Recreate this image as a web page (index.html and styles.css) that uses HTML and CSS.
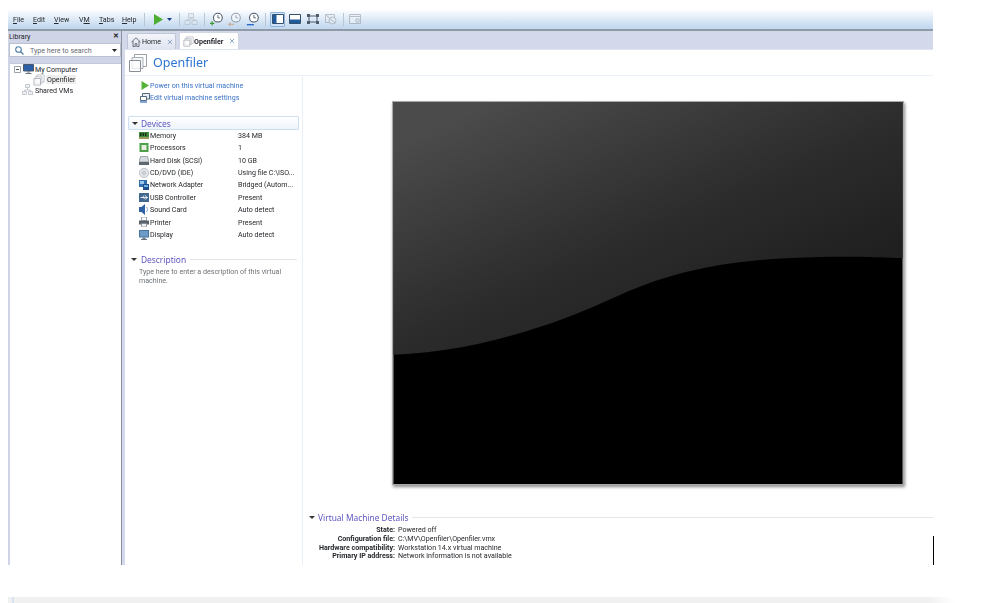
FILE: index.html
```html
<!DOCTYPE html>
<html lang="en">
<head>
<meta charset="utf-8">
<title>Openfiler - VMware Workstation</title>
<link rel="stylesheet" href="styles.css">
</head>
<body>
<svg class="defs" width="0" height="0" aria-hidden="true">
  <symbol id="i-vm" viewBox="0 0 20 20">
    <path d="M6.500 1.500h12v12h-12z" fill="#fff" stroke="#9aa0a8"/>
    <path d="M4 4.500h11v11H4z" fill="#f4f5f7" stroke="#a8aeb5"/>
    <path d="M1.500 7.500h11v11h-11z" fill="#fff" fill-opacity=".7" stroke="#8a9098"/>
  </symbol>
  <symbol id="i-clock" viewBox="0 0 16 16">
    <circle cx="9" cy="6.500" r="5" fill="#fff" stroke="#4c5a68" stroke-width="1.200"/>
    <path d="M9 3.500v3.200h2.400" fill="none" stroke="#4c5a68"/>
  </symbol>
  <symbol id="i-x" viewBox="0 0 7 7">
    <path d="M1 1l5 5M6 1L1 6" fill="none" stroke="#8ba2bd" stroke-width="1.100"/>
  </symbol>
</svg>
<div class="window">
  <header class="toolbar">
    <nav class="menu">
      <span><u>F</u>ile</span>
      <span><u>E</u>dit</span>
      <span><u>V</u>iew</span>
      <span>V<u>M</u></span>
      <span><u>T</u>abs</span>
      <span><u>H</u>elp</span>
    </nav>
    <span class="tsep"></span>
    <svg class="ml8" width="10" height="11" viewBox="0 0 10 11"><path d="M1 0l9 5.500L1 11z" fill="#4caf32"/></svg>
    <svg class="ml4" width="5" height="3" viewBox="0 0 5 3"><path d="M0 0h5L2.500 3z" fill="#1d3f8f"/></svg>
    <span class="tsep ml7"></span>
    <svg class="ml4 faded" width="14" height="14" viewBox="0 0 14 14"><path d="M4.500 1.500h5v4h-5zM1 8.500h5v4H1zM8 8.500h5v4H8z" fill="#dfe6ee" stroke="#a9b2bc"/><path d="M7 5.500v2M3.500 8.500v-1.500h7v1.500" fill="none" stroke="#a9b2bc"/></svg>
    <span class="tsep ml6"></span>
    <svg class="ml5" width="14" height="14" viewBox="0 0 16 16"><use href="#i-clock"/><path d="M0 13h5M2.500 10.500v5" stroke="#3f9a3a" stroke-width="1.400"/></svg>
    <svg class="ml4 faded" width="14" height="14" viewBox="0 0 16 16"><use href="#i-clock"/><path d="M1 14h6M3 12l-2 2 2 2" fill="none" stroke="#c77a3a" stroke-width="1.200"/></svg>
    <svg class="ml4" width="14" height="14" viewBox="0 0 16 16"><use href="#i-clock"/><path d="M1 14.500h8" stroke="#2868c8" stroke-width="1.600"/></svg>
    <span class="tsep ml5"></span>
    <span class="view-active ml4"><svg width="12" height="10" viewBox="0 0 12 10"><path d="M.5.500h11v9H.5z" fill="#fff" stroke="#33506f"/><path d="M1 1h3.500v8H1z" fill="#1f5a9a"/></svg></span>
    <svg class="ml4" width="12" height="10" viewBox="0 0 12 10"><path d="M.5.500h11v9H.5z" fill="#fff" stroke="#33506f"/><path d="M1 5.500h10V9H1z" fill="#1f5a9a"/></svg>
    <svg class="ml6" width="12" height="10" viewBox="0 0 12 10"><path d="M2 2h8v6H2z" fill="none" stroke="#4d5c6c"/><path d="M0 0h3v3H0zM9 0h3v3H9zM0 7h3v3H0zM9 7h3v3H9z" fill="#4d5c6c"/></svg>
    <svg class="ml6 faded" width="12" height="11" viewBox="0 0 12 11"><path d="M.5.500h9v8h-9z" fill="#e6ebf1" stroke="#8e98a3"/><circle cx="7.500" cy="6.500" r="3.500" fill="#e6ebf1" stroke="#8e98a3"/><path d="M1 1l9 8" stroke="#8e98a3"/></svg>
    <span class="tsep ml6"></span>
    <svg class="ml5 faded" width="12" height="10" viewBox="0 0 12 10"><path d="M.5.500h11v9H.5z" fill="#eef1f5" stroke="#8e98a3"/><path d="M.5 2.500h11M7 5h3v3H7z" fill="none" stroke="#8e98a3"/></svg>
  </header>

  <div class="main">
    <aside class="sidebar">
      <div class="lib-head"><span>Library</span><span class="lib-close">✕</span></div>
      <div class="search">
        <svg width="9" height="9" viewBox="0 0 9 9"><circle cx="3.500" cy="3.500" r="2.800" fill="none" stroke="#4d7ea8" stroke-width="1.100"/><path d="M5.500 5.500L8.500 8.500" stroke="#4d7ea8" stroke-width="1.300"/></svg>
        <span class="search-text">Type here to search</span>
        <svg width="5" height="3" viewBox="0 0 5 3"><path d="M0 0h5L2.500 3z" fill="#222"/></svg>
      </div>
      <div class="tree">
        <div class="tree-row">
          <svg class="twist" width="7" height="7" viewBox="0 0 7 7"><path d="M.5.500h6v6h-6z" fill="#fff" stroke="#9aa3ad"/><path d="M2 3.500h3" stroke="#555"/></svg>
          <svg width="11" height="10" viewBox="0 0 11 10"><path d="M.5.500h10v6.500H.5z" fill="#2c5fa8" stroke="#4a5a6c"/><path d="M4 7.500h3v1H4zM2.500 9h6v1h-6z" fill="#6b7683"/></svg>
          <span>My Computer</span>
        </div>
        <div class="tree-row tree-vm">
          <svg width="12" height="12"><use href="#i-vm"/></svg>
          <span class="tree-selected">Openfiler</span>
        </div>
        <div class="tree-row tree-shared">
          <svg class="pale" width="11" height="12" viewBox="0 0 11 12"><path d="M3.500.500h4v3h-4zM.5 7.500h4v3h-4zM6.500 7.500h4v3h-4z" fill="#eceff3" stroke="#b4bac2"/><path d="M5.500 3.500v2.500M2.500 7.500V6h6v1.500" fill="none" stroke="#b4bac2"/></svg>
          <span>Shared VMs</span>
        </div>
      </div>
    </aside>
    <div class="split"></div>

    <section class="content">
      <div class="tabs">
        <div class="tab">
          <svg width="10" height="10" viewBox="0 0 10 10"><path d="M.5 5L5 .8 9.500 5M2 4v5.500h2.200V6.500h1.600v3H8V4" fill="none" stroke="#5c6670" stroke-width=".9"/></svg>
          <span>Home</span>
          <svg class="tab-x" width="6" height="6"><use href="#i-x"/></svg>
        </div>
        <div class="tab tab-on">
          <svg width="11" height="11"><use href="#i-vm"/></svg>
          <span>Openfiler</span>
          <svg class="tab-x" width="6" height="6"><use href="#i-x"/></svg>
        </div>
      </div>
      <div class="title-row">
        <svg width="20" height="20"><use href="#i-vm"/></svg>
        <h1>Openfiler</h1>
      </div>
      <div class="body">
        <div class="left">
          <div class="action">
            <svg width="8" height="9" viewBox="0 0 8 9"><path d="M.5 0L8 4.500.5 9z" fill="#55b33c"/></svg>
            <span>Power on this virtual machine</span>
          </div>
          <div class="action action-b">
            <svg width="10" height="10" viewBox="0 0 10 10"><path d="M2.500.500h7v5.500h-7z" fill="#e9eef4" stroke="#56687c"/><path d="M.5 3.500h6v4h-6z" fill="#fff" stroke="#56687c"/><path d="M0 9h7" stroke="#2a6ac0" stroke-width="1.200"/></svg>
            <span>Edit virtual machine settings</span>
          </div>

          <div class="group-head group-box"><span class="tri"></span><span class="group-title">Devices</span></div>
          <ul class="devices">
            <li>
              <svg width="10" height="7" viewBox="0 0 10 7"><path d="M0 0h10v5H0z" fill="#3f8a3c"/><path d="M1 1h1.500v3H1zM3.500 1H5v3H3.500zM6 1h1.500v3H6z" fill="#16351a"/><path d="M0 5h10v2H0z" fill="#9a9a58"/></svg>
              <span class="d-name">Memory</span><span class="d-val">384 MB</span>
            </li>
            <li>
              <svg width="9" height="9" viewBox="0 0 9 9"><path d="M0 0h9v9H0z" fill="#4f9e4a"/><path d="M2 2h5v5H2z" fill="#e6efe0"/></svg>
              <span class="d-name">Processors</span><span class="d-val">1</span>
            </li>
            <li>
              <svg width="10" height="9" viewBox="0 0 10 9"><path d="M1.500.500h7L10 6H0z" fill="#d7dbe0" stroke="#7e8790" stroke-width=".7"/><path d="M0 6h10v3H0z" fill="#5f6870"/></svg>
              <span class="d-name">Hard Disk (SCSI)</span><span class="d-val">10 GB</span>
            </li>
            <li>
              <svg width="10" height="10" viewBox="0 0 10 10"><circle cx="5" cy="5" r="4.700" fill="#dfe2e6" stroke="#a7adb4" stroke-width=".6"/><circle cx="5" cy="5" r="1.300" fill="#fff" stroke="#8a9097" stroke-width=".6"/></svg>
              <span class="d-name">CD/DVD (IDE)</span><span class="d-val">Using file C:\ISO...</span>
            </li>
            <li>
              <svg width="10" height="10" viewBox="0 0 10 10"><path d="M0 0h8v7H0z" fill="#2f6fb0"/><path d="M1 1h4v3H1z" fill="#9cc6ea"/><path d="M4 4h6v6H4z" fill="#1d4f8c"/><path d="M5 5h4v2H5z" fill="#6fb1e2"/></svg>
              <span class="d-name">Network Adapter</span><span class="d-val">Bridged (Autom...</span>
            </li>
            <li>
              <svg width="10" height="9" viewBox="0 0 10 9"><path d="M0 0h10v9H0z" fill="#44698f"/><path d="M1.500 4.500h7M6 2.500l2.500 2-2.500 2M3.500 4.500l1.500-2M4.500 4.500l1 1.500" fill="none" stroke="#fff" stroke-width=".8"/></svg>
              <span class="d-name">USB Controller</span><span class="d-val">Present</span>
            </li>
            <li>
              <svg width="10" height="11" viewBox="0 0 10 11"><path d="M6 0v11L2.500 8H0V3h2.500z" fill="#2f62a5"/><path d="M7.500 3c1.200 1.500 1.200 3.500 0 5" fill="none" stroke="#8aa4c4"/></svg>
              <span class="d-name">Sound Card</span><span class="d-val">Auto detect</span>
            </li>
            <li>
              <svg width="10" height="10" viewBox="0 0 10 10"><path d="M2.500 0h5v3.500h-5z" fill="#fff" stroke="#7a838c" stroke-width=".7"/><path d="M0 3.500h10v4H0z" fill="#59626b"/><path d="M2.500 6.500h5V10h-5z" fill="#eef0f2" stroke="#7a838c" stroke-width=".7"/></svg>
              <span class="d-name">Printer</span><span class="d-val">Present</span>
            </li>
            <li>
              <svg width="10" height="10" viewBox="0 0 10 10"><path d="M0 0h10v7.500H0z" fill="#47729e"/><path d="M1 1h8v5.500H1z" fill="#6d9ac6"/><path d="M3.500 7.500h3V9h-3zM2 9h6v1H2z" fill="#6b7683"/></svg>
              <span class="d-name">Display</span><span class="d-val">Auto detect</span>
            </li>
          </ul>

          <div class="group-head group-desc"><span class="tri"></span><span class="group-title">Description</span><span class="rule"></span></div>
          <p class="desc">Type here to enter a description of this virtual machine.</p>
        </div>

        <div class="right">
          <div class="stage">
            <svg class="screen" width="512" height="384" viewBox="0 0 512 384">
              <defs>
                <linearGradient id="scr" gradientUnits="userSpaceOnUse" x1="100" y1="0" x2="220" y2="276">
                  <stop offset="0" stop-color="#4b4b4b"/>
                  <stop offset=".6" stop-color="#2c2c2c"/>
                  <stop offset="1" stop-color="#1f1f1f"/>
                </linearGradient>
              </defs>
              <path d="M0 0h512v384H0z" fill="#000"/>
              <path d="M0 0h512v157C490 156 460 155 421 156 350 158 290 165 221 197 150 230 70 252 0 254z" fill="url(#scr)"/>
            </svg>
          </div>
          <div class="details">
            <div class="group-head"><span class="tri"></span><span class="group-title">Virtual Machine Details</span><span class="rule"></span></div>
            <dl class="facts">
              <dt>State:</dt><dd>Powered off</dd>
              <dt>Configuration file:</dt><dd>C:\MV\Openfiler\Openfiler.vmx</dd>
              <dt>Hardware compatibility:</dt><dd>Workstation 14.x virtual machine</dd>
              <dt>Primary IP address:</dt><dd>Network information is not available</dd>
            </dl>
          </div>
        </div>
      </div>
    </section>
  </div>
  <span class="tick"></span>
</div>
<div class="strip"></div>
</body>
</html>
```

FILE: styles.css
```css
* { box-sizing: border-box; }
html, body { height: 100%; }
body {
  margin: 10px 0 0 8px;
  height: 593px;
  overflow: hidden;
  background: #fff;
  font-family: Roboto, "Noto Sans", sans-serif;
  font-size: 7.100px;
  line-height: 9px;
  color: #25282c;
}
.defs { position: absolute; }
svg { display: block; flex: none; }

.window {
  position: relative;
  width: 925px;
  height: 555px;
  display: flex;
  flex-direction: column;
}

/* toolbar */
.toolbar {
  height: 21px;
  flex: none;
  display: flex;
  align-items: center;
  padding: 0 0 1px 5px;
  background: linear-gradient(#fbfdff, #c4d9ef 90%);
  border-bottom: 2px solid #8f9aa9;
  filter: blur(.3px);
}
.menu {
  width: 131px;
  flex: none;
  display: grid;
  grid-template-columns: 20px 21px 25px 20px 23px auto;
}
.tsep { width: 1px; height: 13px; background: #b8c6d6; flex: none; }
.ml4 { margin-left: 4px; }
.ml5 { margin-left: 5px; }
.ml6 { margin-left: 6px; }
.ml7 { margin-left: 7px; }
.ml8 { margin-left: 8px; }
.faded { opacity: .55; }
.pale { opacity: .8; }
.view-active {
  width: 15px;
  height: 15px;
  flex: none;
  display: flex;
  align-items: center;
  justify-content: center;
  background: #cfe2f6;
  border: 1px solid #8fb3d9;
  border-radius: 1px;
}

/* layout */
.main { flex: 1; display: flex; min-height: 0; filter: blur(.3px); }
.sidebar {
  width: 113px;
  flex: none;
  display: flex;
  flex-direction: column;
  background: #cfd4e6;
  padding-left: 2px;
}
.split {
  width: 4px;
  flex: none;
  background: linear-gradient(90deg, #8a909c 0, #8a909c 35%, #d3d8ea 35%);
}
.lib-head {
  height: 12px;
  flex: none;
  display: flex;
  justify-content: space-between;
  align-items: center;
  margin-left: -1px;
  padding: 0 2px 2px 0;
}
.lib-close { font-size: 7px; color: #222; font-weight: 700; }
.search {
  height: 14px;
  flex: none;
  margin-left: -1px;
  display: flex;
  align-items: center;
  padding: 0 3px 0 5px;
  background: #fff;
  border: 1px solid #bcc3d0;
}
.search-text { margin-left: 6px; color: #666c74; flex: 1; }
.tree {
  flex: 1;
  margin-top: 6px;
  background: #fff;
  padding-left: 4px;
  border-top: 1px solid #c3c9d6;
}
.tree-row { display: flex; align-items: center; height: 10.500px; gap: 2px; }
.tree-row svg + svg { margin-right: -1px; }
.tree-vm { padding-left: 19px; gap: 1px; }
.tree-selected { background: #eeeeee; padding: 0 1px; }
.tree-shared { padding-left: 8px; gap: 2px; }

/* tabs */
.content { flex: 1; display: flex; flex-direction: column; min-width: 0; }
.tabs {
  height: 19px;
  flex: none;
  display: flex;
  align-items: flex-end;
  gap: 3px;
  padding-left: 2px;
  background: #d3d8ea;
  border-bottom: 1px solid #dfe4f2;
}
.tab {
  width: 49px;
  height: 16px;
  flex: none;
  display: flex;
  align-items: center;
  gap: 1px;
  padding: 0 2px 0 3px;
  background: linear-gradient(#f3f5fa, #dfe4f1);
  border: 1px solid #bfc6d6;
  border-bottom: 0;
  border-radius: 2px 2px 0 0;
}
.tab-x { margin-left: auto; }
.tab-on {
  width: 60px;
  height: 17px;
  padding-right: 3px;
  gap: 0;
  background: #fff;
  font-weight: 700;
  border-color: #d0d6e4;
}
.title-row {
  height: 26px;
  flex: none;
  display: flex;
  align-items: center;
  gap: 5px;
  padding-left: 3px;
  border-bottom: 1px solid #eaf0f8;
}
h1 { margin: 0; font-size: 12.500px; line-height: 16px; font-weight: 400; font-family: "Noto Sans", sans-serif; color: #2b74d2; }
.body { flex: 1; display: flex; min-height: 0; }

/* left column */
.left {
  width: 178px;
  flex: none;
  padding: 5px 3px 0;
  border-right: 1px solid #e8eff8;
}
.action {
  display: flex;
  align-items: center;
  height: 9px;
  margin-left: 10px;
  padding-left: 3px;
  gap: 1px;
  color: #3a72c4;
}
.action-b { margin-top: 3px; padding-left: 2px; gap: 0; }
.group-head { display: flex; align-items: center; gap: 4px; height: 14px; }
.group-title { font-family: "Noto Sans", sans-serif; font-size: 8.400px; color: #5d57bf; white-space: nowrap; }
.tri {
  width: 0;
  height: 0;
  flex: none;
  border: 3px solid transparent;
  border-top: 3px solid #333;
  border-bottom: 0;
}
.rule { flex: 1; height: 1px; background: #e2e5ea; }
.group-box {
  margin-top: 14px;
  padding-left: 3px;
  gap: 3px;
  background: linear-gradient(#ffffff, #eef4fb);
  border: 1px solid #cfdff2;
  border-radius: 1px;
}
.devices { list-style: none; margin: -1px 0 0; padding: 0; }
.devices li {
  display: flex;
  align-items: center;
  height: 12.440px;
  padding-left: 11px;
}
.devices li svg { width: 10px; margin-right: 1px; }
.d-name { width: 88px; flex: none; }
.d-val { white-space: nowrap; }
.group-desc { margin-top: 12px; padding: 0 2px 0 3px; gap: 4px; }
.desc { margin: 0 0 0 11px; width: 156px; color: #6f7479; }

/* right column */
.right { flex: 1; display: flex; flex-direction: column; min-width: 0; }
.stage { height: 437px; flex: none; padding: 25px 0 0 89px; }
.screen { border: 1px solid #a9a9a9; box-shadow: 1px 2px 3px rgba(0, 0, 0, .45); }
.details { padding-left: 6px; }
.details .group-head { height: 9px; gap: 3px; }
.facts {
  display: grid;
  grid-template-columns: 86px 1fr;
  column-gap: 3px;
  margin: 4px 0 0;
}
.facts dt { text-align: right; font-weight: 700; white-space: nowrap; line-height: 8.800px; }
.facts dd { margin: 0; white-space: nowrap; line-height: 8.800px; }

/* overlays and page bottom */
.tick { position: absolute; left: 925px; top: 526px; width: 1px; height: 29px; background: #000; }
.strip {
  width: 947px;
  height: 6px;
  margin-top: 32px;
  background:
    linear-gradient(90deg, transparent 4px, #d9e2f0 4px, #d9e2f0 6px, transparent 6px),
    linear-gradient(90deg, #f0f0f0 97%, #ffffff);
}
```
